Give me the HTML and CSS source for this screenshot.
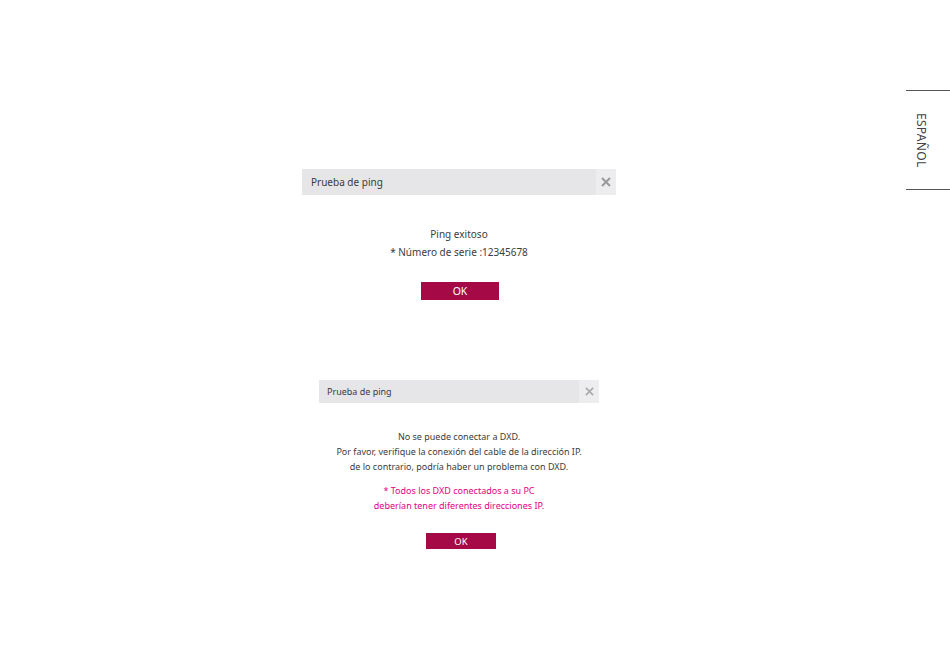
FILE: index.html
```html
<!DOCTYPE html>
<html lang="es">
<head>
    <meta charset="UTF-8">
    <meta name="viewport" content="width=device-width, initial-scale=1.0">
    <title>Prueba de ping</title>
    <link rel="stylesheet" href="styles.css">
</head>
<body>
    <div class="page">
        <div class="main">
            <div class="dialog dialog-ok">
                <div class="dialog-header">
                    <span class="dialog-title">Prueba de ping</span>
                    <span class="close">
                        <svg width="10" height="10" viewBox="0 0 10 10"><path d="M1 1L9 9M9 1L1 9" stroke="#999" stroke-width="2"/></svg>
                    </span>
                </div>
                <div class="dialog-body">
                    <p class="msg">Ping exitoso</p>
                    <p class="msg">* Número de serie :12345678</p>
                    <button type="button" class="ok-btn">OK</button>
                </div>
            </div>

            <div class="dialog dialog-fail">
                <div class="dialog-header">
                    <span class="dialog-title">Prueba de ping</span>
                    <span class="close">
                        <svg width="9" height="9" viewBox="0 0 10 10"><path d="M1 1L9 9M9 1L1 9" stroke="#aaa" stroke-width="1.8"/></svg>
                    </span>
                </div>
                <div class="dialog-body">
                    <p class="msg">No se puede conectar a DXD.</p>
                    <p class="msg">Por favor, verifique la conexión del cable de la dirección IP.</p>
                    <p class="msg">de lo contrario, podría haber un problema con DXD.</p>
                    <div class="note">
                        <p class="msg">* Todos los DXD conectados a su PC</p>
                        <p class="msg">deberían tener diferentes direcciones IP.</p>
                    </div>
                    <button type="button" class="ok-btn">OK</button>
                </div>
            </div>
        </div>

        <div class="side">
            <div class="lang-tab">
                <span class="lang-text">ESPAÑOL</span>
            </div>
        </div>
    </div>
</body>
</html>
```

FILE: styles.css
```css
body {
    margin: 0;
    background-color: #fff;
    font-family: "Noto Sans", "Open Sans", sans-serif;
    color: #3c3c3c;
}
.page {
    display: flex;
    width: 950px;
    height: 670px;
}
.main {
    flex: 1;
    padding-left: 12px;
    padding-top: 169px;
    display: flex;
    flex-direction: column;
    align-items: center;
}
.dialog {
    display: flex;
    flex-direction: column;
}
.dialog-ok {
    width: 314px;
}
.dialog-fail {
    width: 280px;
    margin-top: 80px;
}
.dialog-header {
    display: flex;
    justify-content: space-between;
    align-items: stretch;
    background-color: #e6e6e8;
}
.dialog-ok .dialog-header {
    height: 26px;
}
.dialog-fail .dialog-header {
    height: 23px;
}
.dialog-title {
    display: flex;
    align-items: center;
    color: #3a3a3a;
}
.dialog-ok .dialog-title {
    padding-left: 9px;
    font-size: 10px;
}
.dialog-fail .dialog-title {
    padding-left: 8px;
    font-size: 9px;
}
.close {
    display: flex;
    align-items: center;
    justify-content: center;
    width: 20px;
    background-color: #ededef;
}
.dialog-body {
    display: flex;
    flex-direction: column;
    align-items: center;
}
.msg {
    margin: 0;
    text-align: center;
}
.dialog-ok .dialog-body {
    padding-top: 30px;
}
.dialog-ok .msg {
    font-size: 10px;
    line-height: 18px;
}
.dialog-fail .dialog-body {
    padding-top: 26px;
}
.dialog-fail .msg {
    font-size: 9px;
    line-height: 15px;
}
.note {
    margin-top: 9px;
}
.note .msg {
    color: #e4007f;
}
.ok-btn {
    background-color: #a50a47;
    color: #fff;
    border: none;
    padding: 0;
    font-family: inherit;
    cursor: pointer;
}
.dialog-ok .ok-btn {
    width: 78px;
    height: 18px;
    margin-top: 21px;
    margin-left: 2px;
    font-size: 10.5px;
}
.dialog-fail .ok-btn {
    width: 70px;
    height: 16px;
    margin-top: 20px;
    margin-left: 4px;
    font-size: 9.5px;
}
.side {
    width: 44px;
    padding-top: 90px;
}
.lang-tab {
    height: 98px;
    border-top: 1px solid #555;
    border-bottom: 1px solid #555;
    display: flex;
    align-items: center;
    justify-content: center;
    padding-right: 14px;
}
.lang-text {
    writing-mode: vertical-rl;
    font-size: 12px;
    color: #444;
    letter-spacing: 0.3px;
}
```
